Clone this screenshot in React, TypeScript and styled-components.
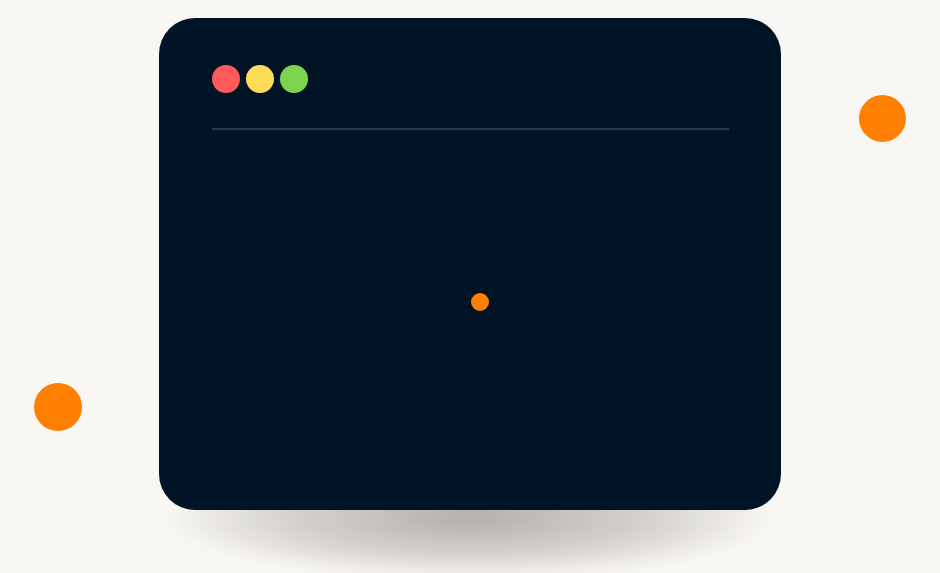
import React from 'react';
import styled, { createGlobalStyle } from 'styled-components';

const GlobalStyle = createGlobalStyle`
    html, body {
        margin: 0;
        padding: 0;
        background: #f9f7f3;
        font-family: 'Inter', 'Liberation Sans', sans-serif;
    }
`

const Stage = styled.div`
    position: relative;
    width: 940px;
    height: 573px;
    overflow: hidden;
    display: flex;
    justify-content: center;
    padding-top: 18px;
    box-sizing: border-box;
`

const Blob = styled.div<{ $size: number; $x: number; $y: number }>`
    position: absolute;
    left: ${p => p.$x - p.$size / 2}px;
    top: ${p => p.$y - p.$size / 2}px;
    width: ${p => p.$size}px;
    height: ${p => p.$size}px;
    border-radius: 50%;
    background: #ff8000;
`

const WindowWrap = styled.div`
    position: relative;
    width: 622px;
    height: 492px;
`

const Shadow = styled.div`
    position: absolute;
    left: 10px;
    right: 10px;
    top: 440px;
    height: 120px;
    border-radius: 50%;
    background: radial-gradient(ellipse at 50% 50%, rgba(130, 125, 118, 0.6) 0%, rgba(160, 156, 150, 0.38) 45%, rgba(249, 247, 243, 0) 72%);
    filter: blur(6px);
`

const Window = styled.div`
    position: relative;
    height: 100%;
    background: #011425;
    border-radius: 36px;
    padding: 47px 52px 0 53px;
    box-sizing: border-box;
    display: flex;
    flex-direction: column;
`

const TitleBar = styled.div`
    display: flex;
    gap: 6px;
    padding-bottom: 35px;
    border-bottom: 2px solid #2a3746;
`

const Light = styled.div<{ $color: string }>`
    width: 28px;
    height: 28px;
    border-radius: 50%;
    background: ${p => p.$color};
`

const Body = styled.div`
    flex: 1;
    display: flex;
    align-items: center;
    justify-content: center;
    padding-bottom: 36px;
`

const Pulse = styled.div`
    width: 18px;
    height: 18px;
    border-radius: 50%;
    background: #ff8000;
    margin-left: 19px;
`

function App() {
    return (
        <>
            <GlobalStyle />
            <Stage>
                <Blob $size={47} $x={882} $y={118} />
                <Blob $size={48} $x={58} $y={407} />
                <WindowWrap>
                    <Shadow />
                    <Window>
                        <TitleBar>
                            <Light $color="#ff5a5a" />
                            <Light $color="#ffdc55" />
                            <Light $color="#7dd34e" />
                        </TitleBar>
                        <Body>
                            <Pulse />
                        </Body>
                    </Window>
                </WindowWrap>
            </Stage>
        </>
    );
}

export default App;
